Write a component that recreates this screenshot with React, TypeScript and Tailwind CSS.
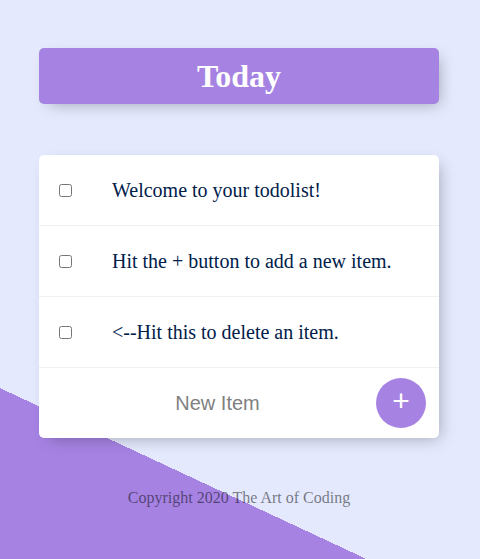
const items = [
  'Welcome to your todolist!',
  'Hit the + button to add a new item.',
  '<--Hit this to delete an item.',
];

export default function App() {
  return (
    <div className="h-[559px] overflow-hidden bg-[#E4E9FD] bg-[linear-gradient(25deg,#A683E3_50%,#E4E9FD_50%)] bg-[length:100%_1000px] bg-no-repeat pt-[48px] font-['Liberation_Serif',serif]">
      <div className="ml-[39px] flex h-14 w-[400px] items-center justify-center rounded-[5px] bg-[#A683E3] shadow-[5px_5px_15px_-5px_rgba(0,0,0,0.3)]">
        <h1 className="text-[32px] font-bold leading-none text-white">Today</h1>
      </div>

      <div className="ml-[39px] mt-[51px] w-[400px] rounded-[5px] bg-white shadow-[5px_5px_15px_-5px_rgba(0,0,0,0.3)]">
        {items.map((item) => (
          <div key={item} className="flex h-[71px] items-center border-b border-[#F1F1F1]">
            <input type="checkbox" className="m-5 h-[13px] w-[13px] shrink-0" />
            <p className="px-5 text-[20px] font-extralight text-[#00204a]">{item}</p>
          </div>
        ))}
        <form className="ml-5 flex h-[70px] items-center" onSubmit={(e) => e.preventDefault()}>
          <input
            type="text"
            placeholder="New Item"
            className="h-[60px] w-[313px] pl-[4px] text-center font-['Liberation_Sans',sans-serif] text-[20px] font-extralight placeholder:text-[grey] focus:outline-none"
          />
          <button
            type="submit"
            className="ml-[4px] flex h-[50px] w-[50px] items-center justify-center rounded-full bg-[#A683E3] pb-[6px] font-['Liberation_Sans',sans-serif] text-[30px] text-white"
          >
            +
          </button>
        </form>
      </div>

      <footer className="ml-[39px] mt-[48px] w-[400px] text-center text-[16px] text-black/50">
        Copyright 2020 The Art of Coding
      </footer>
    </div>
  );
}
